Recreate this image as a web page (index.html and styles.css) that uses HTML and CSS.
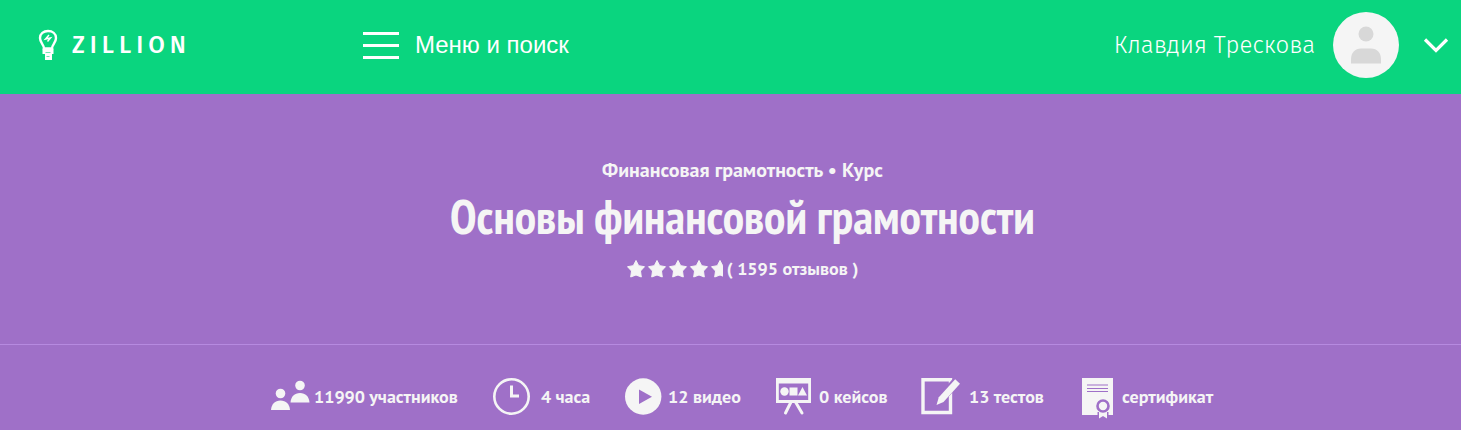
FILE: index.html
```
<!DOCTYPE html>
<html lang="ru">
<head>
    <meta charset="UTF-8">
    <meta name="viewport" content="width=device-width, initial-scale=1.0">
    <title>Основы финансовой грамотности</title>
    <link rel="stylesheet" href="styles.css">
</head>
<body>
    <header class="header">
        <a class="logo" href="#">
            <svg width="20" height="32" viewBox="0 0 20 32" fill="none" stroke="#fff">
                <path d="M6 19.500C6 15.500 2 14 2 9C2 4.500 5.500 2 10 2s8 2.500 8 7c0 5-4 6.500-4 10.500z" stroke-width="2.400"/>
                <path d="M4.500 19.500h11v5.500H14v6H7v-6H4.500z" fill="#fff" stroke="none"/>
                <path d="M7.500 23.500h5M8.500 27.500h3" stroke="#0ad57f" stroke-width=".6"/>
                <path d="M11 6L7.500 10l5-1L9.500 12.500" stroke-width="1.500"/>
            </svg>
            <span>ZILLION</span>
        </a>
        <button class="menu-button" type="button">
            <span class="burger"></span>
            Меню и поиск
        </button>
        <button class="user" type="button">
            <span class="user-name">Клавдия Трескова</span>
            <svg class="avatar" width="66" height="66" viewBox="0 0 66 66">
                <circle cx="33" cy="33" r="33" fill="#f5f5f5"/>
                <circle cx="33" cy="22" r="7.500" fill="#d8d8d8"/>
                <path d="M18 51.500v-4c0-7 4-11 10-11h10c6 0 10 4 10 11v4z" fill="#d8d8d8"/>
            </svg>
            <svg width="24" height="16" viewBox="0 0 24 16" fill="none" stroke="#fff" stroke-width="3.200">
                <path d="M1 2.500L12 13.500 23 2.500"/>
            </svg>
        </button>
    </header>

    <main class="course">
        <section class="intro">
            <p class="category">Финансовая грамотность • Курс</p>
            <h1>Основы финансовой грамотности</h1>
            <div class="rating">
                <svg width="96" height="20" viewBox="0 0 96 20" fill="#f5f5f5" stroke="#f5f5f5" stroke-linejoin="round">
                    <defs>
                        <path id="star" d="M9 1.500l2.700 5.200 5.800 1-4 4.300.8 6L9 16l-5.300 2 .8-6-4-4.300 5.800-1z"/>
                    </defs>
                    <use href="#star"/>
                    <use href="#star" x="21"/>
                    <use href="#star" x="42"/>
                    <use href="#star" x="63"/>
                    <use href="#star" x="84"/>
                </svg>
                <span>( 1595 отзывов )</span>
            </div>
        </section>

        <ul class="stats">
            <li>
                <svg width="38" height="42" viewBox="0 0 38 42" fill="#f5f5f5">
                    <circle cx="9.500" cy="18.500" r="4.800"/>
                    <path d="M0 35c.5-6 4-9.500 9.500-9.500S18.500 29 19 35z"/>
                    <circle cx="29" cy="10.500" r="4.800"/>
                    <path d="M19.500 27.500c.5-6 4-9.500 9.500-9.500s9 3.500 9.500 9.500z"/>
                </svg>
                <span>11990 участников</span>
            </li>
            <li class="wide">
                <svg width="38" height="42" viewBox="0 0 38 42" fill="none" stroke="#f5f5f5">
                    <circle cx="18.500" cy="21.500" r="17.200" stroke-width="2.600"/>
                    <path d="M18.500 10.500v10.500h7.500" stroke-width="3"/>
                </svg>
                <span>4 часа</span>
            </li>
            <li>
                <svg width="38" height="42" viewBox="0 0 38 42">
                    <circle cx="18.200" cy="21.500" r="18.200" fill="#f5f5f5"/>
                    <path d="M14 14.500v14.500l13-7.200z" fill="#9f70c8"/>
                </svg>
                <span>12 видео</span>
            </li>
            <li>
                <svg width="38" height="42" viewBox="0 0 38 42" fill="#f5f5f5">
                    <path fill-rule="evenodd" d="M0 3h35v25H0zM2.800 8.500v16.500h29.400V8.500z"/>
                    <circle cx="8.500" cy="16.500" r="4.200"/>
                    <path d="M13.500 12.500h8v8h-8zM26.500 12l4.500 8.500h-9z"/>
                    <path d="M15 27L9.500 38M19.500 27L26 38" stroke="#f5f5f5" stroke-width="3" stroke-linecap="round"/>
                </svg>
                <span>0 кейсов</span>
            </li>
            <li class="wide">
                <svg width="38" height="42" viewBox="0 0 38 42">
                    <path d="M2 4.800h27.500v32.700H2z" fill="none" stroke="#f5f5f5" stroke-width="3.400"/>
                    <path d="M35 7L20 23.500" fill="none" stroke="#9f70c8" stroke-width="9"/>
                    <path d="M34.200 4.200l4.800 4.600-16.500 18.200-7 3 2.300-7.700z" fill="#f5f5f5"/>
                </svg>
                <span>13 тестов</span>
            </li>
            <li class="certificate">
                <svg width="32" height="42" viewBox="0 0 32 42">
                    <path d="M0 3h31v37H0z" fill="#f5f5f5"/>
                    <path d="M5 10h21M5 13.500h21M5 16.500h21" stroke="#9f70c8" stroke-width="1.200"/>
                    <path d="M15.500 37h11v5h-11z" fill="#9f70c8"/>
                    <path d="M17 34v9.500l4-2.500 4 2.500V34z" fill="#f5f5f5"/>
                    <circle cx="21" cy="31" r="5.500" fill="#f5f5f5" stroke="#9f70c8" stroke-width="2.600"/>
                </svg>
                <span>сертификат</span>
            </li>
        </ul>
    </main>
</body>
</html>
```
FILE: styles.css
```
* {
    box-sizing: border-box;
}
body {
    margin: 0;
    background-color: #9f70c8;
    color: #f5f5f5;
    font-family: "PT Sans", "Noto Sans", sans-serif;
}
svg {
    display: block;
    flex: none;
    overflow: visible;
}
button {
    border: 0;
    padding: 0;
    background: none;
    color: #fff;
    cursor: pointer;
}
.header {
    display: flex;
    align-items: center;
    height: 94px;
    padding: 0 13px 4px 38px;
    background-color: #0ad57f;
}
.logo {
    display: flex;
    align-items: center;
    gap: 14px;
    width: 325px;
    color: #fff;
    font-family: "Fira Sans", "Open Sans", sans-serif;
    font-size: 24px;
    font-weight: 500;
    letter-spacing: 5px;
    text-decoration: none;
}
.menu-button {
    display: flex;
    align-items: center;
    gap: 16px;
    font-family: "Liberation Sans", Arial, sans-serif;
    font-size: 24px;
}
.burger {
    width: 36px;
    height: 27px;
    border-top: 3px solid #fff;
    border-bottom: 3px solid #fff;
    background: linear-gradient(#fff, #fff) center / 100% 3px no-repeat;
}
.user {
    display: flex;
    align-items: center;
    margin-left: auto;
}
.user-name {
    font-family: "Fira Sans", "Open Sans", sans-serif;
    font-size: 24px;
    font-weight: 300;
}
.avatar {
    margin: 0 25px 0 18px;
}
.intro {
    display: flex;
    flex-direction: column;
    align-items: center;
    height: 251px;
    padding: 62px 0 0 24px;
    border-bottom: 1px solid #b68ae0;
}
.category {
    margin: 0;
    font-size: 20px;
    font-weight: 700;
    line-height: 28px;
}
h1 {
    margin: 0;
    font-family: "PT Sans Narrow", "Liberation Sans Narrow", sans-serif;
    font-size: 48px;
    font-weight: 700;
    line-height: 64px;
}
.rating {
    display: flex;
    align-items: center;
    gap: 4px;
    font-size: 18px;
    font-weight: 700;
    line-height: 42px;
}
.rating svg {
    overflow: hidden;
}
.stats {
    display: grid;
    grid-template-columns: 222px 132px 151px 145px 161px 132px;
    justify-content: center;
    margin: 0;
    padding: 30px 0 12px 24px;
    list-style: none;
    font-size: 18px;
    font-weight: 700;
    white-space: nowrap;
}
.stats li {
    display: flex;
    align-items: center;
    gap: 5px;
}
.stats .wide {
    gap: 10px;
}
.stats .certificate {
    gap: 8px;
}
```
